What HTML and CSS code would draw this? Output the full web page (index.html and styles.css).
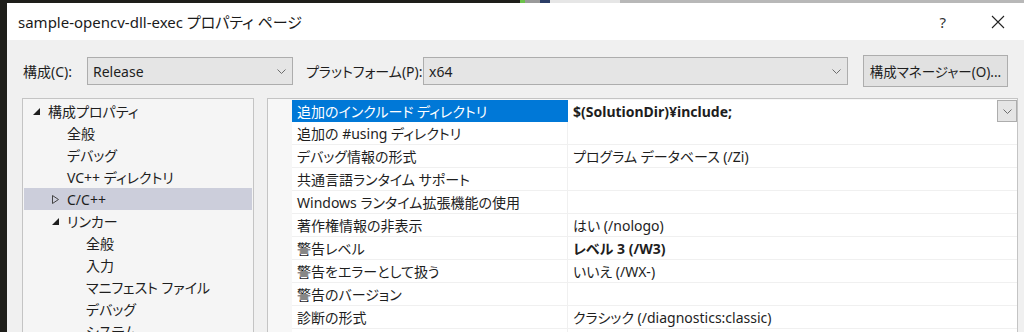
FILE: index.html
```html
<!DOCTYPE html>
<html lang="ja">
<head>
    <meta charset="UTF-8">
    <title>sample-opencv-dll-exec プロパティ ページ</title>
    <link rel="stylesheet" href="styles.css">
</head>
<body>
    <div class="topstrip">
        <div class="strip-dark"></div>
        <div class="strip-thumb green"></div>
        <div class="strip-thumb gray"></div>
        <div class="strip-thumb navy"></div>
        <div class="strip-thumb pale"></div>
        <div class="strip-light"></div>
    </div>

    <div class="dialog">
        <!-- title bar -->
        <div class="titlebar">
            <span class="title">sample-opencv-dll-exec プロパティ ページ</span>
            <span class="help">?</span>
            <span class="close">
                <svg width="14" height="14" viewBox="0 0 14 14"><path d="M1 1 L13 13 M13 1 L1 13" stroke="#222" stroke-width="1.1" fill="none"/></svg>
            </span>
        </div>

        <!-- configuration row -->
        <div class="toolbar">
            <label class="cfg-label">構成(C):</label>
            <div class="combo combo-cfg">
                <span>Release</span>
                <svg class="chev" width="9" height="5" viewBox="0 0 9 5"><path d="M0.5 0.5 L4.5 4.5 L8.5 0.5" stroke="#6d6d6d" fill="none"/></svg>
            </div>
            <label class="plat-label">プラットフォーム(P):</label>
            <div class="combo combo-plat">
                <span>x64</span>
                <svg class="chev" width="9" height="5" viewBox="0 0 9 5"><path d="M0.5 0.5 L4.5 4.5 L8.5 0.5" stroke="#6d6d6d" fill="none"/></svg>
            </div>
            <button class="mgr-btn">構成マネージャー(O)...</button>
        </div>

        <div class="main">
            <!-- tree -->
            <div class="tree">
                <div class="node lvl0">
                    <svg class="tri" width="7" height="7" viewBox="0 0 7 7"><polygon points="7,0 7,7 0,7" fill="#1e1e1e"/></svg>構成プロパティ
                </div>
                <div class="node lvl1">全般</div>
                <div class="node lvl1">デバッグ</div>
                <div class="node lvl1">VC++ ディレクトリ</div>
                <div class="node lvl1 group selected">
                    <svg class="tri" width="7" height="9" viewBox="0 0 7 9"><polygon points="0.5,0.5 6.5,4.5 0.5,8.5" fill="none" stroke="#444"/></svg>C/C++
                </div>
                <div class="node lvl1 group">
                    <svg class="tri" width="7" height="7" viewBox="0 0 7 7"><polygon points="7,0 7,7 0,7" fill="#1e1e1e"/></svg>リンカー
                </div>
                <div class="node lvl2">全般</div>
                <div class="node lvl2">入力</div>
                <div class="node lvl2">マニフェスト ファイル</div>
                <div class="node lvl2">デバッグ</div>
                <div class="node lvl2">システム</div>
            </div>

            <!-- property grid -->
            <div class="grid">
                <div class="row active">
                    <div class="gutter"></div>
                    <div class="name">追加のインクルード ディレクトリ</div>
                    <div class="value bold">
                        <span>$(SolutionDir)¥include;</span>
                        <span class="drop">
                            <svg width="9" height="5" viewBox="0 0 9 5"><path d="M0.5 0.5 L4.5 4.5 L8.5 0.5" stroke="#6d6d6d" fill="none"/></svg>
                        </span>
                    </div>
                </div>
                <div class="row"><div class="gutter"></div><div class="name">追加の #using ディレクトリ</div><div class="value"></div></div>
                <div class="row"><div class="gutter"></div><div class="name">デバッグ情報の形式</div><div class="value">プログラム データベース (/Zi)</div></div>
                <div class="row"><div class="gutter"></div><div class="name">共通言語ランタイム サポート</div><div class="value"></div></div>
                <div class="row"><div class="gutter"></div><div class="name">Windows ランタイム拡張機能の使用</div><div class="value"></div></div>
                <div class="row"><div class="gutter"></div><div class="name">著作権情報の非表示</div><div class="value">はい (/nologo)</div></div>
                <div class="row"><div class="gutter"></div><div class="name">警告レベル</div><div class="value bold">レベル 3 (/W3)</div></div>
                <div class="row"><div class="gutter"></div><div class="name">警告をエラーとして扱う</div><div class="value">いいえ (/WX-)</div></div>
                <div class="row"><div class="gutter"></div><div class="name">警告のバージョン</div><div class="value"></div></div>
                <div class="row"><div class="gutter"></div><div class="name">診断の形式</div><div class="value">クラシック (/diagnostics:classic)</div></div>
                <div class="row"><div class="gutter"></div><div class="name"></div><div class="value"></div></div>
            </div>
        </div>
    </div>
</body>
</html>
```

FILE: styles.css
```css
body {
    margin: 0;
    height: 332px;
    overflow: hidden;
    background: #1e1e1a;
    font-family: "Noto Sans", "Noto Sans CJK JP", sans-serif;
    font-feature-settings: "palt";
    font-size: 14px;
    color: #1e1e1e;
}

.topstrip {
    display: flex;
    height: 3px;
}

.strip-dark {
    width: 520px;
    background: #1e1e1a;
}

.strip-thumb {
    width: 10px;
}

.strip-thumb.green {
    width: 5px;
    background: #6cc24a;
}

.strip-thumb.gray {
    width: 15px;
    background: #9a9a9a;
}

.strip-thumb.navy {
    background: #2b3d66;
}

.strip-thumb.pale {
    width: 70px;
    background: #e6e6e6;
}

.strip-light {
    flex: 1;
    background: #b8b8b8;
}

.dialog {
    margin-left: 7px;
    height: 329px;
    background: #f0f0f0;
    overflow: hidden;
}

.titlebar {
    display: flex;
    align-items: center;
    height: 37px;
    background: #ffffff;
    padding-left: 11px;
}

.title {
    font-size: 15px;
    flex: 1;
    color: #1a1a1a;
}

.help {
    font-size: 15px;
    color: #333;
    margin-right: 45px;
}

.close {
    display: flex;
    margin-right: 19px;
}

.toolbar {
    display: flex;
    align-items: center;
    padding-top: 15px;
    height: 32px;
}

.cfg-label {
    margin-left: 16px;
    width: 64px;
}

.combo {
    display: flex;
    align-items: center;
    justify-content: space-between;
    box-sizing: border-box;
    height: 28px;
    background: #e5e5e5;
    border: 1px solid #adadad;
    padding: 0 6px 0 5px;
}

.combo-cfg {
    width: 206px;
}

.plat-label {
    margin-left: 13px;
    width: 117px;
}

.combo-plat {
    width: 425px;
}

.mgr-btn {
    margin-left: 15px;
    box-sizing: border-box;
    width: 145px;
    height: 32px;
    background: #e1e1e1;
    border: 1px solid #adadad;
    font: inherit;
    font-size: 13.5px;
    color: inherit;
    padding: 0;
}

.main {
    display: flex;
    margin-top: 11px;
    margin-left: 15px;
    gap: 13px;
}

.tree {
    box-sizing: border-box;
    width: 232px;
    height: 240px;
    background: #f5f5f5;
    border: 1px solid #c4c4c4;
    padding: 1px;
}

.node {
    display: flex;
    align-items: center;
    height: 22px;
    white-space: nowrap;
}

.node .tri {
    margin-right: 8px;
}

.lvl0 {
    padding-left: 9px;
}

.lvl1 {
    padding-left: 43px;
}

.lvl1.group {
    padding-left: 28px;
}

.lvl2 {
    padding-left: 62px;
}

.selected {
    background: #cccedb;
}

.grid {
    box-sizing: border-box;
    width: 751px;
    height: 240px;
    background: #f7f7f7;
    border: 1px solid #c4c4c4;
    padding-top: 1px;
}

.row {
    display: flex;
    height: 23px;
}

.row.active {
    height: 22px;
}

.gutter {
    width: 24px;
    background: #f7f7f7;
}

.name,
.value {
    display: flex;
    align-items: center;
    box-sizing: border-box;
    background: #ffffff;
    border-bottom: 1px solid #f0f0f0;
    white-space: nowrap;
}

.name {
    width: 276px;
    padding-left: 5px;
    border-right: 1px solid #f0f0f0;
}

.value {
    flex: 1;
    padding-left: 5px;
    justify-content: space-between;
}

.bold {
    font-weight: bold;
}

.row.active .name {
    background: #0078d7;
    color: #ffffff;
    border-right-color: #0078d7;
    border-bottom: none;
}

.row.active .value {
    border-bottom: none;
}

.drop {
    display: flex;
    align-items: center;
    justify-content: center;
    box-sizing: border-box;
    width: 20px;
    height: 22px;
    background: #e5e5e5;
    border: 1px solid #adadad;
}
```
